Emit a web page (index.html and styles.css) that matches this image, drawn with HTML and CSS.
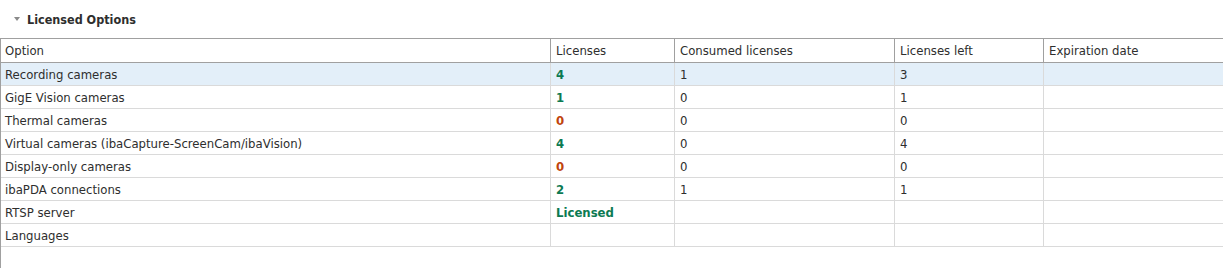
FILE: index.html
```html
<!DOCTYPE html>
<html>
<head>
<meta charset="utf-8">
<link rel="stylesheet" href="styles.css">
</head>
<body>
<div class="page">
  <div class="section-title">
    <span class="caret"></span>
    <span class="title-text">Licensed Options</span>
  </div>
  <div class="grid-wrap">
    <div class="grid">
      <div class="hd">Option</div>
      <div class="hd">Licenses</div>
      <div class="hd">Consumed licenses</div>
      <div class="hd">Licenses left</div>
      <div class="hd last">Expiration date</div>

      <div class="row selected">
        <div class="c">Recording cameras</div>
        <div class="c num ok">4</div>
        <div class="c">1</div>
        <div class="c">3</div>
        <div class="c last"></div>
      </div>
      <div class="row">
        <div class="c">GigE Vision cameras</div>
        <div class="c num ok">1</div>
        <div class="c">0</div>
        <div class="c">1</div>
        <div class="c last"></div>
      </div>
      <div class="row">
        <div class="c">Thermal cameras</div>
        <div class="c num no">0</div>
        <div class="c">0</div>
        <div class="c">0</div>
        <div class="c last"></div>
      </div>
      <div class="row">
        <div class="c">Virtual cameras (ibaCapture-ScreenCam/ibaVision)</div>
        <div class="c num ok">4</div>
        <div class="c">0</div>
        <div class="c">4</div>
        <div class="c last"></div>
      </div>
      <div class="row">
        <div class="c">Display-only cameras</div>
        <div class="c num no">0</div>
        <div class="c">0</div>
        <div class="c">0</div>
        <div class="c last"></div>
      </div>
      <div class="row">
        <div class="c">ibaPDA connections</div>
        <div class="c num ok">2</div>
        <div class="c">1</div>
        <div class="c">1</div>
        <div class="c last"></div>
      </div>
      <div class="row">
        <div class="c">RTSP server</div>
        <div class="c num ok">Licensed</div>
        <div class="c"></div>
        <div class="c"></div>
        <div class="c last"></div>
      </div>
      <div class="row">
        <div class="c">Languages</div>
        <div class="c"></div>
        <div class="c"></div>
        <div class="c"></div>
        <div class="c last"></div>
      </div>
    </div>
  </div>
</div>
</body>
</html>
```
FILE: styles.css
```css
html, body {
  margin: 0;
  padding: 0;
  background: #ffffff;
}
body {
  font-family: "DejaVu Sans Condensed", "DejaVu Sans", sans-serif;
  font-size: 13px;
  color: #2e2e2e;
}
.page {
  width: 1223px;
  height: 268px;
  display: flex;
  flex-direction: column;
  overflow: hidden;
}
.section-title {
  height: 38px;
  display: flex;
  align-items: center;
  padding-left: 14px;
  box-sizing: border-box;
}
.caret {
  width: 0;
  height: 0;
  border-left: 3.5px solid transparent;
  border-right: 3.5px solid transparent;
  border-top: 4px solid #8a8a8a;
  margin-right: 7px;
}
.title-text {
  font-weight: bold;
  font-size: 12.5px;
  color: #2e2e2e;
}
.grid-wrap {
  flex: 1;
  border-left: 1px solid #a0a0a0;
}
.grid {
  display: grid;
  grid-template-columns: 550px 124px 220px 149px 1fr;
  border-top: 1px solid #a0a0a0;
}
.row {
  display: contents;
}
.hd {
  height: 23px;
  line-height: 23px;
  padding-left: 4px;
  border-right: 1px solid #a0a0a0;
  border-bottom: 1px solid #a0a0a0;
  white-space: nowrap;
}
.c {
  height: 22px;
  line-height: 23px;
  padding-left: 4px;
  border-right: 1px solid #dadada;
  border-bottom: 1px solid #dadada;
  white-space: nowrap;
  overflow: hidden;
}
.hd + .hd, .c + .c {
  padding-left: 5px;
}
.last {
  border-right: none;
}
.selected .c {
  background: #e3eff9;
}
.num {
  font-weight: bold;
  font-size: 13px;
}
.ok {
  color: #0c7a52;
}
.no {
  color: #c0440c;
}
```
